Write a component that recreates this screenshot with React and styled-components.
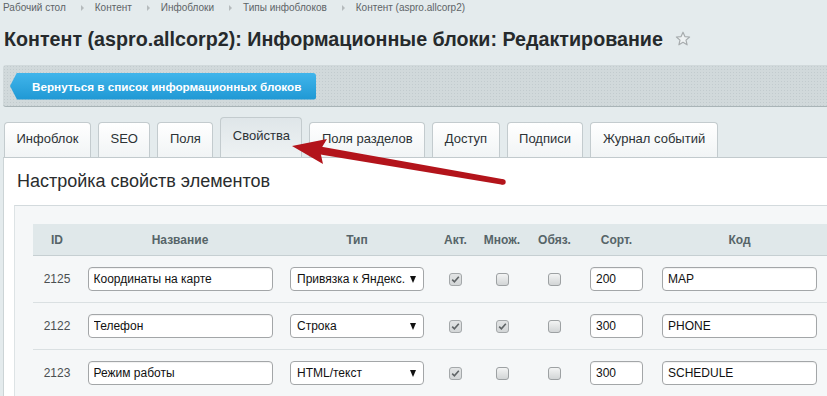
import React from "react";
import styled, { createGlobalStyle } from "styled-components";

const GlobalStyle = createGlobalStyle`
  html, body {
    margin: 0;
    padding: 0;
    overflow: hidden;
    background: #e4ebed;
    font-family: "Liberation Sans", Arial, sans-serif;
  }
`;

const crumbs = ["Рабочий стол", "Контент", "Инфоблоки", "Типы инфоблоков", "Контент (aspro.allcorp2)"];
const tabs = ["Инфоблок", "SEO", "Поля", "Свойства", "Поля разделов", "Доступ", "Подписи", "Журнал событий"];

const rows = [
  { id: 2125, name: "Координаты на карте", type: "Привязка к Яндекс.", act: true, multi: false, req: false, sort: 200, code: "MAP" },
  { id: 2122, name: "Телефон", type: "Строка", act: true, multi: true, req: false, sort: 300, code: "PHONE" },
  { id: 2123, name: "Режим работы", type: "HTML/текст", act: true, multi: false, req: false, sort: 300, code: "SCHEDULE" },
];

const columns = [
  { title: "ID", width: 48 },
  { title: "Название", width: 198 },
  { title: "Тип", width: 156 },
  { title: "Акт.", width: 41 },
  { title: "Множ.", width: 52 },
  { title: "Обяз.", width: 53 },
  { title: "Сорт.", width: 71 },
  { title: "Код", width: 175 },
];

const CheckBox = ({ checked }) => (
  <Check checked={checked}>
    {checked && (
      <svg width="11" height="11" viewBox="0 0 11 11">
        <path d="M2.2 5.6 L4.4 7.8 L8.8 2.8" fill="none" stroke="#5f6466" strokeWidth="1.6" />
      </svg>
    )}
  </Check>
);

const Star = () => (
  <svg width="16" height="16" viewBox="0 0 16 16">
    <polygon
      points="8,1.2 9.9,5.6 14.6,6 11,9.1 12.1,13.8 8,11.3 3.9,13.8 5,9.1 1.4,6 6.1,5.6"
      fill="#eef2f3"
      stroke="#a7acae"
      strokeWidth="1.2"
      strokeLinejoin="round"
    />
  </svg>
);

const App = () => {
  return (
    <Page>
      <GlobalStyle />
      <Breadcrumbs>
        {crumbs.map((c, i) => (
          <React.Fragment key={c}>
            <Crumb>{c}</Crumb>
            {i < crumbs.length - 1 && <CrumbSep />}
          </React.Fragment>
        ))}
      </Breadcrumbs>
      <TitleRow>
        <Title>Контент (aspro.allcorp2): Информационные блоки: Редактирование</Title>
        <Star />
      </TitleRow>
      <Toolbar>
        <BackButton>Вернуться в список информационных блоков</BackButton>
      </Toolbar>
      <TabRow>
        {tabs.map((t) => (
          <Tab key={t} active={t === "Свойства"}>{t}</Tab>
        ))}
      </TabRow>
      <Panel>
        <PanelHeading>Настройка свойств элементов</PanelHeading>
        <InnerBox>
          <PropsTable>
            <colgroup>
              {columns.map((c) => (
                <col key={c.title} style={{ width: c.width }} />
              ))}
            </colgroup>
            <thead>
              <tr>
                {columns.map((c) => (
                  <Th key={c.title}>{c.title}</Th>
                ))}
              </tr>
            </thead>
            <tbody>
              {rows.map((r) => (
                <tr key={r.id}>
                  <Td>{r.id}</Td>
                  <Td><TextInput width={185} defaultValue={r.name} /></Td>
                  <Td>
                    <SelectBox>
                      <SelectText>{r.type}</SelectText>
                      <Caret />
                    </SelectBox>
                  </Td>
                  <Td><CheckBox checked={r.act} /></Td>
                  <Td><CheckBox checked={r.multi} /></Td>
                  <Td><CheckBox checked={r.req} /></Td>
                  <Td><TextInput width={53} defaultValue={r.sort} /></Td>
                  <Td><TextInput width={155} defaultValue={r.code} /></Td>
                </tr>
              ))}
            </tbody>
          </PropsTable>
        </InnerBox>
      </Panel>
      <ArrowLayer width="827" height="396" viewBox="0 0 827 396">
        <polygon points="320.3,146.6 503.4,179.3 502.6,184.7 318.9,154.2" fill="#b3141b" />
        <circle cx="503" cy="182" r="2.7" fill="#b3141b" />
        <polygon points="292,146 327,139 320,150.4 323,164" fill="#b3141b" />
      </ArrowLayer>
    </Page>
  );
};

const Page = styled.div`
  position: relative;
  width: 827px;
  height: 396px;
  overflow: hidden;
`;

const Breadcrumbs = styled.div`
  display: flex;
  align-items: center;
  padding: 2px 0 0 3px;
  height: 12px;
  font-size: 10px;
  line-height: 12px;
  color: #5e6467;
`;

const Crumb = styled.span`
  white-space: nowrap;
`;

const CrumbSep = styled.span`
  width: 0;
  height: 0;
  margin: 0 11px 0 15px;
  border-left: 3px solid #b5bbbd;
  border-top: 3px solid transparent;
  border-bottom: 3px solid transparent;
`;

const TitleRow = styled.div`
  display: flex;
  align-items: center;
  gap: 12px;
  margin-top: 13px;
  padding-left: 4px;
  height: 24px;
`;

const Title = styled.h1`
  margin: 0;
  font-size: 19.7px;
  line-height: 24px;
  font-weight: bold;
  color: #262a2c;
  white-space: nowrap;
`;

const Toolbar = styled.div`
  display: flex;
  align-items: center;
  margin: 14px 0 0 3px;
  height: 41px;
  padding-left: 7px;
  border-radius: 3px 0 0 3px;
  border-bottom: 1px solid #a9b4b7;
  background-color: #d1d9db;
  background-image: radial-gradient(#c2cbce 0.7px, transparent 0.8px);
  background-size: 3px 3px;
`;

const BackButton = styled.button`
  height: 27px;
  margin-top: 1px;
  padding: 0 15px 0 22px;
  border: none;
  border-radius: 0 3px 3px 0;
  clip-path: polygon(7px 0, 100% 0, 100% 100%, 7px 100%, 0 50%);
  background: linear-gradient(#41b5eb, #1f98d4);
  color: #fff;
  font-family: "Liberation Sans", Arial, sans-serif;
  font-size: 11.7px;
  font-weight: bold;
  cursor: pointer;
`;

const TabRow = styled.div`
  display: flex;
  align-items: flex-end;
  gap: 7px;
  margin-top: 10px;
  padding-left: 4px;
`;

const Tab = styled.div`
  box-sizing: border-box;
  height: ${(p) => (p.active ? "40px" : "35px")};
  padding: ${(p) => (p.active ? "10px" : "8px")} 11.5px 0;
  border: 1px solid #c3cbce;
  border-bottom: none;
  border-radius: 4px 4px 0 0;
  background: ${(p) =>
    p.active ? "linear-gradient(#dfe6e9, #eef2f3)" : "linear-gradient(#ffffff, #f1f4f5)"};
  font-size: 13px;
  line-height: 16px;
  color: #2c3235;
  white-space: nowrap;
`;

const Panel = styled.div`
  margin-left: 3px;
  height: 300px;
  background: #fff;
  border-top: 1px solid #c2cacd;
  border-left: 1px solid #ccd4d6;
`;

const PanelHeading = styled.h2`
  margin: 0;
  padding: 13px 0 0 13px;
  font-size: 18px;
  line-height: 21px;
  font-weight: normal;
  color: #2a2d2e;
`;

const InnerBox = styled.div`
  margin: 13px 0 0 10px;
  padding: 18px 0 0 18px;
  background: #f5f7f8;
  border-top: 1px solid #d3dadd;
  border-left: 1px solid #dde3e5;
  height: 300px;
`;

const PropsTable = styled.table`
  width: 794px;
  table-layout: fixed;
  border-collapse: collapse;
`;

const Th = styled.th`
  height: 31px;
  padding: 0;
  background: #e0e8ea;
  border-bottom: 1px solid #c6cfd2;
  font-size: 12px;
  font-weight: bold;
  color: #566468;
  text-align: center;
`;

const Td = styled.td`
  height: 46px;
  padding: 0;
  border-bottom: 1px solid #dae0e2;
  text-align: center;
  vertical-align: middle;
  font-size: 12px;
  color: #4a4f51;
`;

const TextInput = styled.input`
  box-sizing: border-box;
  width: ${(p) => p.width}px;
  height: 24px;
  padding: 0 5px;
  border: 1px solid #a3a6a8;
  border-radius: 4px;
  background: #fff;
  box-shadow: inset 0 1px 1px rgba(0, 0, 0, 0.06);
  font-family: "Liberation Sans", Arial, sans-serif;
  font-size: 12px;
  color: #111;
  vertical-align: middle;
`;

const SelectBox = styled.div`
  box-sizing: border-box;
  display: inline-flex;
  align-items: center;
  justify-content: space-between;
  width: 134px;
  height: 24px;
  padding: 0 7px 0 6px;
  border: 1px solid #a3a6a8;
  border-radius: 4px;
  background: #fff;
  vertical-align: middle;
  font-size: 12px;
  color: #111;
`;

const SelectText = styled.span`
  white-space: nowrap;
  text-align: left;
`;

const Caret = styled.span`
  flex: none;
  width: 0;
  height: 0;
  border-left: 3.5px solid transparent;
  border-right: 3.5px solid transparent;
  border-top: 7px solid #111;
`;

const Check = styled.span`
  box-sizing: border-box;
  display: inline-flex;
  align-items: center;
  justify-content: center;
  width: 13px;
  height: 13px;
  border: 1px solid ${(p) => (p.checked ? "#a4a8aa" : "#9da1a3")};
  border-radius: 3px;
  background: ${(p) =>
    p.checked ? "linear-gradient(#e2e4e5, #d3d6d7)" : "linear-gradient(#f3f4f4, #d2d5d6)"};
  vertical-align: middle;
`;

const ArrowLayer = styled.svg`
  position: absolute;
  top: 0;
  left: 0;
  pointer-events: none;
`;

export default App;
